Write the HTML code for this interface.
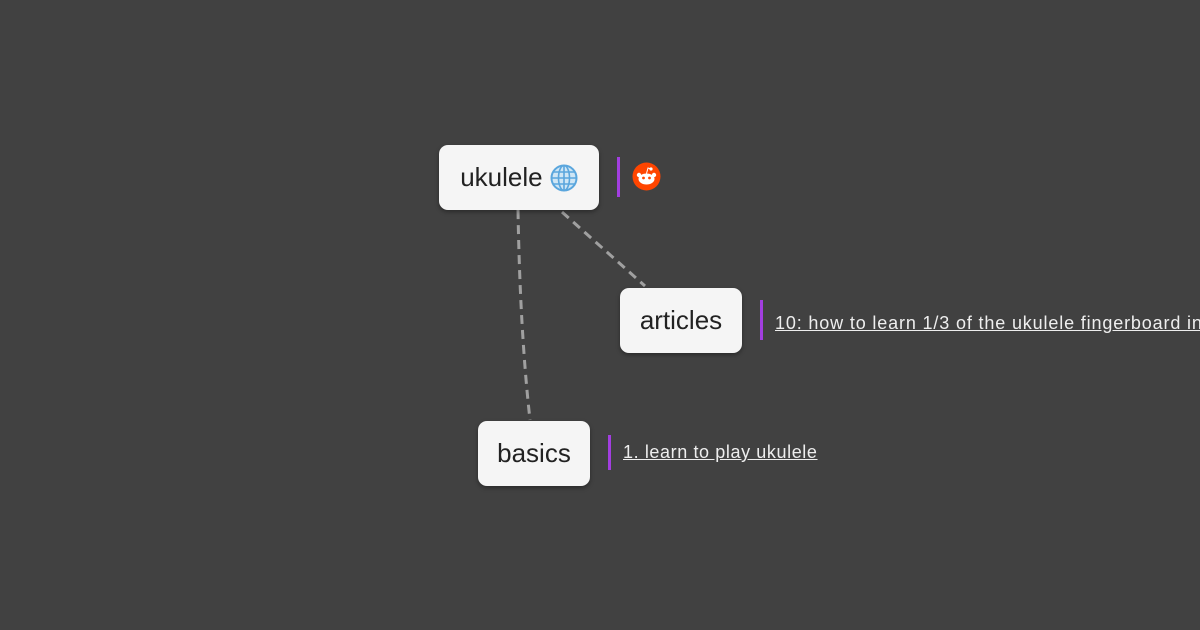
<!DOCTYPE html>
<html><head><meta charset="utf-8"><style>
body{margin:0;width:1200px;height:630px;background:#414141;overflow:hidden;position:relative;font-family:"Liberation Sans",sans-serif}
.n{position:absolute;background:#f5f5f5;border-radius:9px;color:#222;font-size:26px;display:flex;align-items:center;justify-content:center;box-shadow:0 2px 4px rgba(0,0,0,.35);font-weight:300}
.bar{position:absolute;width:3px;background:#a23ee0}
.l{position:absolute;color:#eee;font-size:18px;text-decoration:underline;white-space:nowrap}
</style></head><body>
<svg width="1200" height="630" style="position:absolute;left:0;top:0">
<g stroke="#a0a0a0" stroke-width="3" stroke-dasharray="9,6" fill="none">
<path d="M518 210 Q520 330 530 420"/>
<path d="M562 212 L645 286"/>
</g></svg>
<div class="n" style="left:439px;top:145px;width:160px;height:65px">ukulele&nbsp;<svg width="28" height="28" viewBox="0 0 28 28"><circle cx="14" cy="14" r="12.5" fill="#cfe6f5" stroke="#5aa6dd" stroke-width="2"/><ellipse cx="14" cy="14" rx="5.5" ry="12.5" fill="none" stroke="#5aa6dd" stroke-width="1.6"/><path d="M1.5 14H26.5M3.5 8H24.5M3.5 20H24.5M14 1.5V26.5" stroke="#5aa6dd" stroke-width="1.6"/></svg></div>
<div class="bar" style="left:617px;top:157px;height:40px"></div>
<svg style="position:absolute;left:632px;top:162px" width="29" height="29" viewBox="0 0 29 29"><circle cx="14.5" cy="14.5" r="14" fill="#ff4500"/><ellipse cx="14.5" cy="17" rx="8" ry="5.5" fill="#fff"/><circle cx="7" cy="13" r="2.2" fill="#fff"/><circle cx="22" cy="13" r="2.2" fill="#fff"/><circle cx="19" cy="7" r="1.6" fill="#fff"/><path d="M14.5 11.5L16 6L19 7" stroke="#fff" stroke-width="1" fill="none"/><circle cx="11.5" cy="16" r="1.4" fill="#ff4500"/><circle cx="17.5" cy="16" r="1.4" fill="#ff4500"/></svg>
<div class="n" style="left:620px;top:288px;width:122px;height:65px">articles</div>
<div class="bar" style="left:760px;top:300px;height:40px"></div>
<div class="l" style="left:775px;top:313px;letter-spacing:0.85px">10: how to learn 1/3 of the ukulele fingerboard in</div>
<div class="n" style="left:478px;top:421px;width:112px;height:65px">basics</div>
<div class="bar" style="left:608px;top:435px;height:35px"></div>
<div class="l" style="left:623px;top:442px;letter-spacing:0.6px">1. learn to play ukulele</div>
</body></html>
